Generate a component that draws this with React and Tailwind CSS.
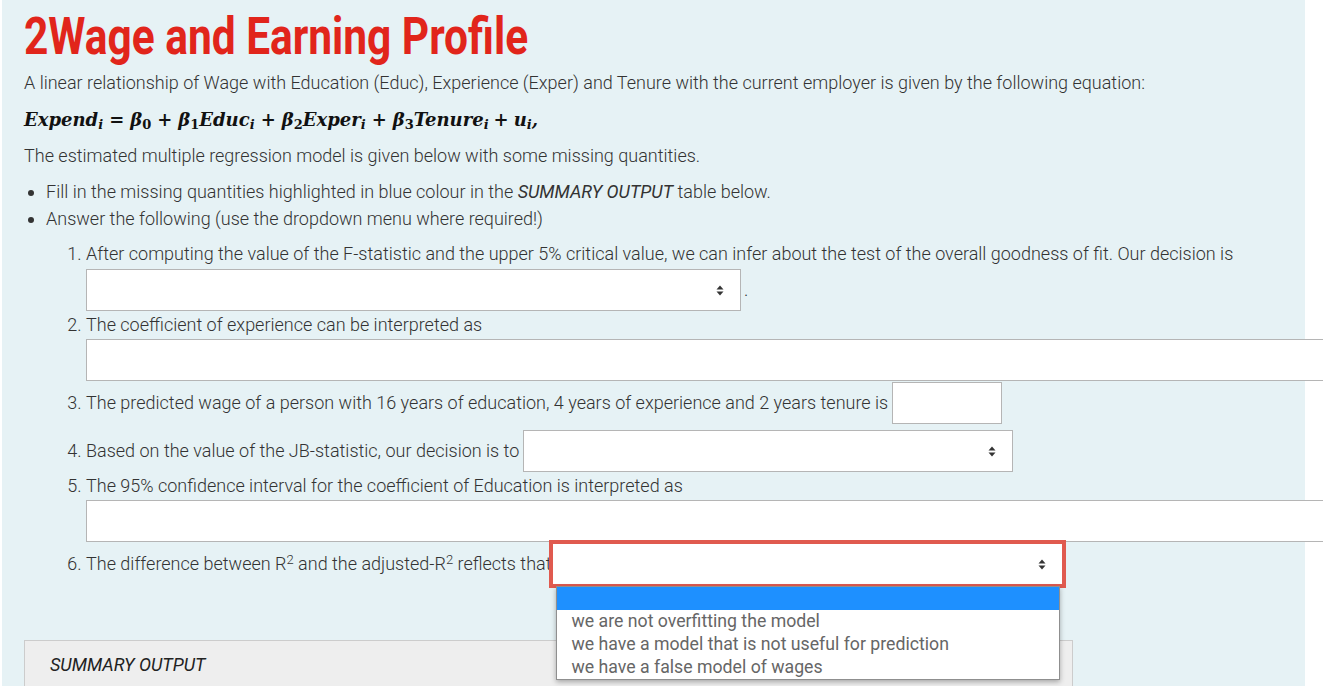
import React from 'react';

const SortIcon = () => (
    <svg width="8" height="11" viewBox="0 0 8 11" className="shrink-0">
        <path d="M4 0.5 L7.5 4.5 L0.5 4.5 Z" fill="#333" />
        <path d="M4 10.5 L7.5 6.5 L0.5 6.5 Z" fill="#333" />
    </svg>
);

const SelectBox = ({ className = '' }) => (
    <div className={`flex items-center justify-end bg-white border border-[#b5b5b5] h-[42px] pr-[16px] ${className}`}>
        <SortIcon />
    </div>
);

const options = [
    'we are not overfitting the model',
    'we have a model that is not useful for prediction',
    'we have a false model of wages',
];

const Sub = ({ children, italic }) => (
    <sub className={`text-[13px] ${italic ? 'italic' : 'not-italic'}`}>{children}</sub>
);

const App = () => {
    return (
        <div className="w-full h-[686px] overflow-hidden bg-white font-['Roboto',sans-serif] text-[#333]">
            <div className="ml-[2px] w-[1303px] h-[686px] bg-[#e6f2f5] pl-[22px] pt-[7px]">
                <h1 className="text-[52px] leading-[60px] font-bold text-[#e1251b] inline-block origin-left scale-x-[0.816] whitespace-nowrap">
                    2Wage and Earning Profile
                </h1>

                <p className="mt-[4px] text-[18px] leading-[24px] font-light whitespace-nowrap">
                    A linear relationship of Wage with Education (Educ), Experience (Exper) and Tenure with the current employer is given by the following equation:
                </p>

                <div className="mt-[11px] h-[28px] leading-[28px] text-[18px] font-['DejaVu_Serif',serif] font-bold italic text-[#111] whitespace-nowrap">
                    Expend<Sub italic>i</Sub>
                    <span className="mx-[6px] not-italic">=</span>
                    β<Sub>0</Sub>
                    <span className="mx-[6px] not-italic">+</span>
                    β<Sub>1</Sub>Educ<Sub italic>i</Sub>
                    <span className="mx-[6px] not-italic">+</span>
                    β<Sub>2</Sub>Exper<Sub italic>i</Sub>
                    <span className="mx-[6px] not-italic">+</span>
                    β<Sub>3</Sub>Tenure<Sub italic>i</Sub>
                    <span className="mx-[5px] not-italic">+</span>
                    u<Sub italic>i</Sub>,
                </div>

                <p className="mt-[10px] text-[18px] leading-[24px] font-light">
                    The estimated multiple regression model is given below with some missing quantities.
                </p>

                <ul className="mt-[10px] list-disc pl-[22px] text-[18px] leading-[27px] font-light">
                    <li>
                        Fill in the missing quantities highlighted in blue colour in the <i className="font-normal">SUMMARY OUTPUT</i> table below.
                    </li>
                    <li>Answer the following (use the dropdown menu where required!)</li>
                </ul>

                <ol className="mt-[10px] list-decimal pl-[62px] text-[18px] leading-[24px] font-light">
                    <li>
                        After computing the value of the F-statistic and the upper 5% critical value, we can infer about the test of the overall goodness of fit. Our decision is
                        <div className="mt-[3px] flex items-center">
                            <SelectBox className="w-[655px]" />
                            <span className="ml-[3px]">.</span>
                        </div>
                    </li>
                    <li className="mt-[2px]">
                        The coefficient of experience can be interpreted as
                        <div className="mt-[2px] w-[1300px] h-[42px] bg-white border border-[#b5b5b5]" />
                    </li>
                    <li className="mt-[1px]">
                        <div className="flex items-center h-[42px]">
                            <span>The predicted wage of a person with 16 years of education, 4 years of experience and 2 years tenure is</span>
                            <div className="ml-[4px] w-[110px] h-[42px] bg-white border border-[#b5b5b5]" />
                        </div>
                    </li>
                    <li className="mt-[6px]">
                        <div className="flex items-center h-[42px]">
                            <span>Based on the value of the JB-statistic, our decision is to</span>
                            <SelectBox className="ml-[4px] w-[490px]" />
                        </div>
                    </li>
                    <li className="mt-[2px]">
                        The 95% confidence interval for the coefficient of Education is interpreted as
                        <div className="mt-[2px] w-[1300px] h-[42px] bg-white border border-[#b5b5b5]" />
                    </li>
                    <li className="mt-[1px]">
                        <div className="flex items-center h-[42px]">
                            <span>
                                The difference between R<sup className="text-[13px]">2</sup> and the adjusted-R<sup className="text-[13px]">2</sup> reflects that
                            </span>
                            <div className="relative z-10">
                                <SelectBox className="w-[511px] border-[#e05a4f] outline-[3px] outline-solid outline-[#e05a4f]" />
                                <div className="absolute left-[4px] top-[43px] w-[504px] bg-white border border-[#8f8f8f] shadow-[0_2px_5px_rgba(0,0,0,0.3)] text-[17.7px] leading-[23px] font-normal text-[#666]">
                                    <div className="h-[23px] bg-[#1e90ff]" />
                                    {options.map((opt) => (
                                        <div key={opt} className="pl-[15px] whitespace-nowrap">{opt}</div>
                                    ))}
                                </div>
                            </div>
                        </div>
                    </li>
                </ol>

                <div className="mt-[55px] w-[1049px] h-[80px] bg-[#eeeeee] border border-[#cccccc] pl-[25px] pt-[12px]">
                    <span className="text-[18px] leading-[24px] italic font-normal text-[#222]">SUMMARY OUTPUT</span>
                </div>
            </div>
        </div>
    );
};

export default App;
